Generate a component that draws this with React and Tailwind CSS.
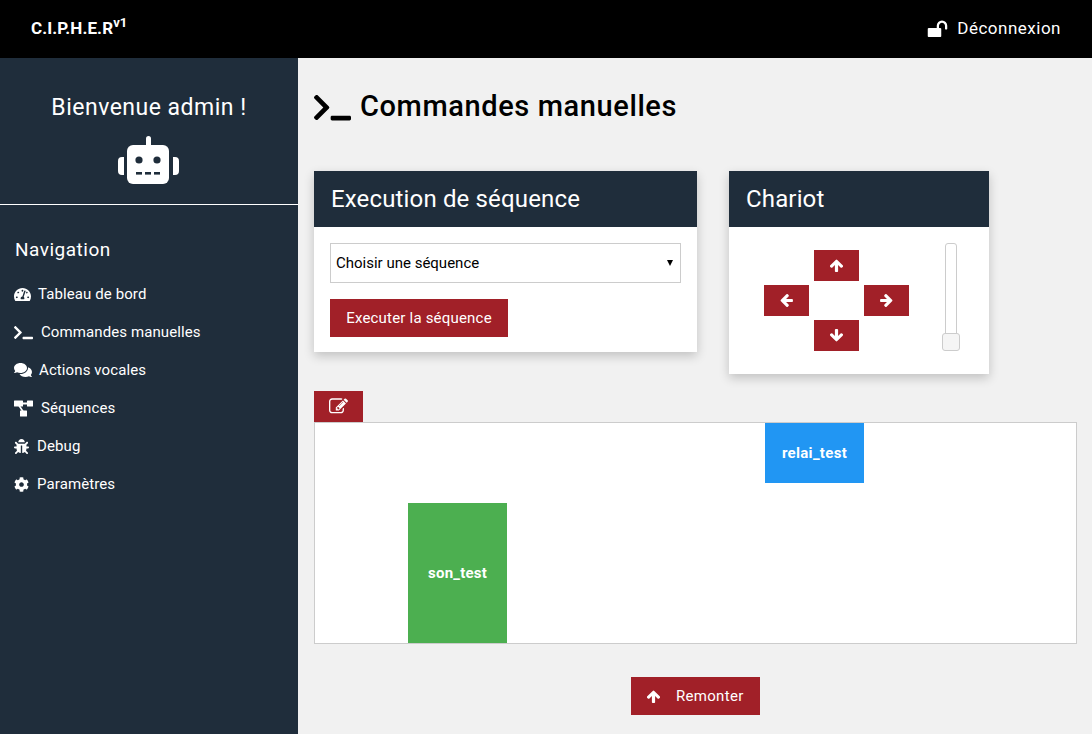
import React from "react";
import { FaTachometerAlt, FaTerminal, FaComments, FaBug, FaCog } from "react-icons/fa";

function Unlock() {
  return (
    <svg width="21" height="21" viewBox="0 0 1792 1792" fill="currentColor" className="shrink-0">
      <path d="M1728 576v256q0 26-19 45t-45 19h-64q-26 0-45-19t-19-45v-256q0-106-75-181t-181-75-181 75-75 181v192h96q40 0 68 28t28 68v576q0 40-28 68t-68 28h-960q-40 0-68-28t-28-68v-576q0-40 28-68t68-28h672v-192q0-185 131.500-316.500t316.500-131.500 316.500 131.500 131.500 316.500z" />
    </svg>
  );
}

function ArrowIcon({ size = 15, className = "" }) {
  return (
    <svg width={size} height={size} viewBox="0 0 1792 1792" fill="currentColor" className={`shrink-0 ${className}`}>
      <path d="M1675 971q0 51-37 90l-75 75q-38 38-91 38-54 0-90-38l-294-293v704q0 52-37.500 84.500t-90.500 32.500h-128q-53 0-90.500-32.500t-37.500-84.500v-704l-294 293q-36 38-90 38t-90-38l-75-75q-38-38-38-90 0-53 38-91l651-651q35-37 90-37 54 0 91 37l651 651q37 39 37 91z" />
    </svg>
  );
}

function EditIcon() {
  return (
    <svg width="19" height="19" viewBox="0 0 1792 1792" fill="currentColor">
      <path d="M888 1184l116-116-152-152-116 116v56h96v96h56zm440-720q-16-16-33 1l-350 350q-17 17-1 33t33-1l350-350q17-17 1-33zm80 594v190q0 119-84.500 203.500t-203.500 84.500h-832q-119 0-203.500-84.500t-84.500-203.500v-832q0-119 84.500-203.500t203.500-84.500h832q63 0 117 25 15 7 18 23 3 17-9 29l-49 49q-14 14-32 8-23-6-45-6h-832q-66 0-113 47t-47 113v832q0 66 47 113t113 47h832q66 0 113-47t47-113v-126q0-13 9-22l64-64q15-15 35-7t20 29zm-96-738l288 288-672 672h-288v-288zm444 132l-92 92-288-288 92-92q28-28 68-28t68 28l152 152q28 28 28 68t-28 68z" />
    </svg>
  );
}

function Robot() {
  return (
    <svg width="61" height="48" viewBox="0 0 61 48" className="mt-[13px] mr-px">
      <rect x="28" y="0" width="5" height="12" rx="2.5" fill="#fff" />
      <rect x="9" y="9" width="42" height="39" rx="6" fill="#fff" />
      <path d="M6 21v18h-2a4 4 0 0 1-4-4V25a4 4 0 0 1 4-4zM55 21h2a4 4 0 0 1 4 4v10a4 4 0 0 1-4 4h-2z" fill="#fff" />
      <circle cx="21" cy="24" r="3.6" fill="#1f2d3b" />
      <circle cx="39" cy="24" r="3.6" fill="#1f2d3b" />
      <rect x="18" y="36" width="6" height="2.6" fill="#1f2d3b" />
      <rect x="27" y="36" width="6" height="2.6" fill="#1f2d3b" />
      <rect x="36" y="36" width="6" height="2.6" fill="#1f2d3b" />
    </svg>
  );
}

function Sitemap({ size }) {
  return (
    <svg width={size} height={size} viewBox="0 0 19 16" fill="currentColor" className="shrink-0">
      <rect x="0" y="0" width="9" height="6" rx="0.5" />
      <rect x="13" y="0" width="6" height="6" rx="0.5" />
      <rect x="6" y="10" width="7" height="6" rx="0.5" />
      <path d="M9 2h4v2H9zM4 5h2l4 6H8z" />
    </svg>
  );
}

const nav = [
  [FaTachometerAlt, "Tableau de bord", 17, "gap-[7px]"],
  [FaTerminal, "Commandes manuelles", 19, "gap-[8px]"],
  [FaComments, "Actions vocales", 18, "gap-[7px]"],
  [Sitemap, "Séquences", 19, "gap-[8px]"],
  [FaBug, "Debug", 15, "gap-[8px]"],
  [FaCog, "Paramètres", 15, "gap-[8px]"],
];

function Arrow({ rotate, className }) {
  return (
    <button className={`w-[45px] h-[31px] bg-[#a12028] text-white flex items-center justify-center ${className}`}>
      <ArrowIcon className={rotate} />
    </button>
  );
}

function Card({ title, className, children }) {
  return (
    <section className={`bg-white shadow-[0_4px_10px_0_rgba(0,0,0,0.2)] ${className}`}>
      <h2 className="h-14 bg-[#1f2d3b] text-white flex items-center px-[17px] text-[24px] tracking-[0.15px]">{title}</h2>
      {children}
    </section>
  );
}

export default function App() {
  return (
    <div className="w-[1092px] h-[734px] overflow-hidden flex flex-col bg-[#f1f1f1] font-['Roboto',sans-serif]">
      <header className="h-[58px] shrink-0 bg-black text-white flex items-center justify-between pl-[31px] pr-[31px]">
        <div className="font-bold text-[17px] leading-none relative top-[-1px] tracking-[0.1px]">
          C.I.P.H.E.R<sup className="text-[13px] align-baseline relative top-[-7px]">v1</sup>
        </div>
        <div className="flex items-center gap-[9px] text-[17px] tracking-[0.5px]">
          <Unlock />
          <span>Déconnexion</span>
        </div>
      </header>
      <div className="flex-1 flex min-h-0">
        <aside className="w-[298px] shrink-0 bg-[#1f2d3b] text-white">
          <div className="h-[147px] border-b border-white flex flex-col items-center pt-[35px]">
            <div className="text-[23px] leading-[30px] tracking-[0.5px]">Bienvenue admin !</div>
            <div className="flex">
              <Robot />
            </div>
          </div>
          <div className="pl-[14px] pr-[15px] pt-[32px]">
            <div className="text-[19px] leading-[26px] mb-[12px] ml-px tracking-[0.5px]">Navigation</div>
            <ul className="flex flex-col">
              {nav.map(([I, label, size, gap]) => (
                <li key={label} className={`h-[38px] flex items-center text-[15px] tracking-[0.1px] ${gap}`}>
                  <I size={size} className="shrink-0" />
                  <span>{label}</span>
                </li>
              ))}
            </ul>
          </div>
        </aside>
        <main className="flex-1 min-w-0 px-[15px] flex flex-col">
          <h1 className="flex items-center gap-[9px] h-[32px] mt-[33px] font-medium text-black text-[29px] tracking-[0.6px] pl-px">
            <FaTerminal size={37} />
            <span>Commandes manuelles</span>
          </h1>
          <div className="flex items-start gap-[32px] mt-[48px] pl-px">
            <Card title="Execution de séquence" className="w-[383px] h-[181px]">
              <div className="px-4 pt-4">
                <div className="relative">
                  <select className="appearance-none w-full h-10 border border-[#ccc] bg-white text-[15px] text-black pl-[5px]">
                    <option>Choisir une séquence</option>
                  </select>
                  <span className="absolute right-[8px] top-[17px] w-0 h-0 border-x-[3px] border-x-transparent border-t-[6px] border-t-black" />
                </div>
                <button className="mt-4 h-[38px] w-[178px] bg-[#a12028] text-white text-[15px] tracking-[0.2px]">Executer la séquence</button>
              </div>
            </Card>
            <Card title="Chariot" className="w-[260px] h-[203px]">
              <div className="relative h-[147px]">
                <div className="grid grid-cols-[45px_45px_45px] grid-rows-[31px_31px_31px] gap-x-[5px] gap-y-1 absolute left-[35px] top-[23px]">
                  <Arrow rotate="" className="col-start-2 row-start-1" />
                  <Arrow rotate="-rotate-90" className="col-start-1 row-start-2" />
                  <Arrow rotate="rotate-90" className="col-start-3 row-start-2" />
                  <Arrow rotate="rotate-180" className="col-start-2 row-start-3" />
                </div>
                <div className="absolute left-[216px] top-4 w-3 h-[100px] border border-[#ccc] rounded-[3px] bg-white" />
                <div className="absolute left-[213px] top-[106px] w-[18px] h-[18px] border border-[#ccc] rounded-[3px] bg-[#f5f5f5]" />
              </div>
            </Card>
          </div>
          <div className="mt-[17px] pl-px">
            <button className="w-[49px] h-[31px] bg-[#a12028] text-white flex items-center justify-center">
              <EditIcon />
            </button>
            <div className="relative h-[222px] w-[763px] bg-white border border-[#ccc]">
              <div className="absolute left-[450px] top-0 w-[99px] h-[60px] bg-[#2196f3] text-white font-bold text-[15px] tracking-[0.3px] flex items-center justify-center">relai_test</div>
              <div className="absolute left-[93px] top-[80px] w-[99px] h-[140px] bg-[#4caf50] text-white font-bold text-[15px] tracking-[0.2px] flex items-center justify-center">son_test</div>
            </div>
          </div>
          <div className="flex justify-center mt-[33px] pl-px">
            <button className="w-[129px] h-[38px] bg-[#a12028] text-white text-[15px] tracking-[0.3px] flex items-center pl-[15px] gap-[15px]">
              <ArrowIcon size={15} />
              <span>Remonter</span>
            </button>
          </div>
        </main>
      </div>
    </div>
  );
}
